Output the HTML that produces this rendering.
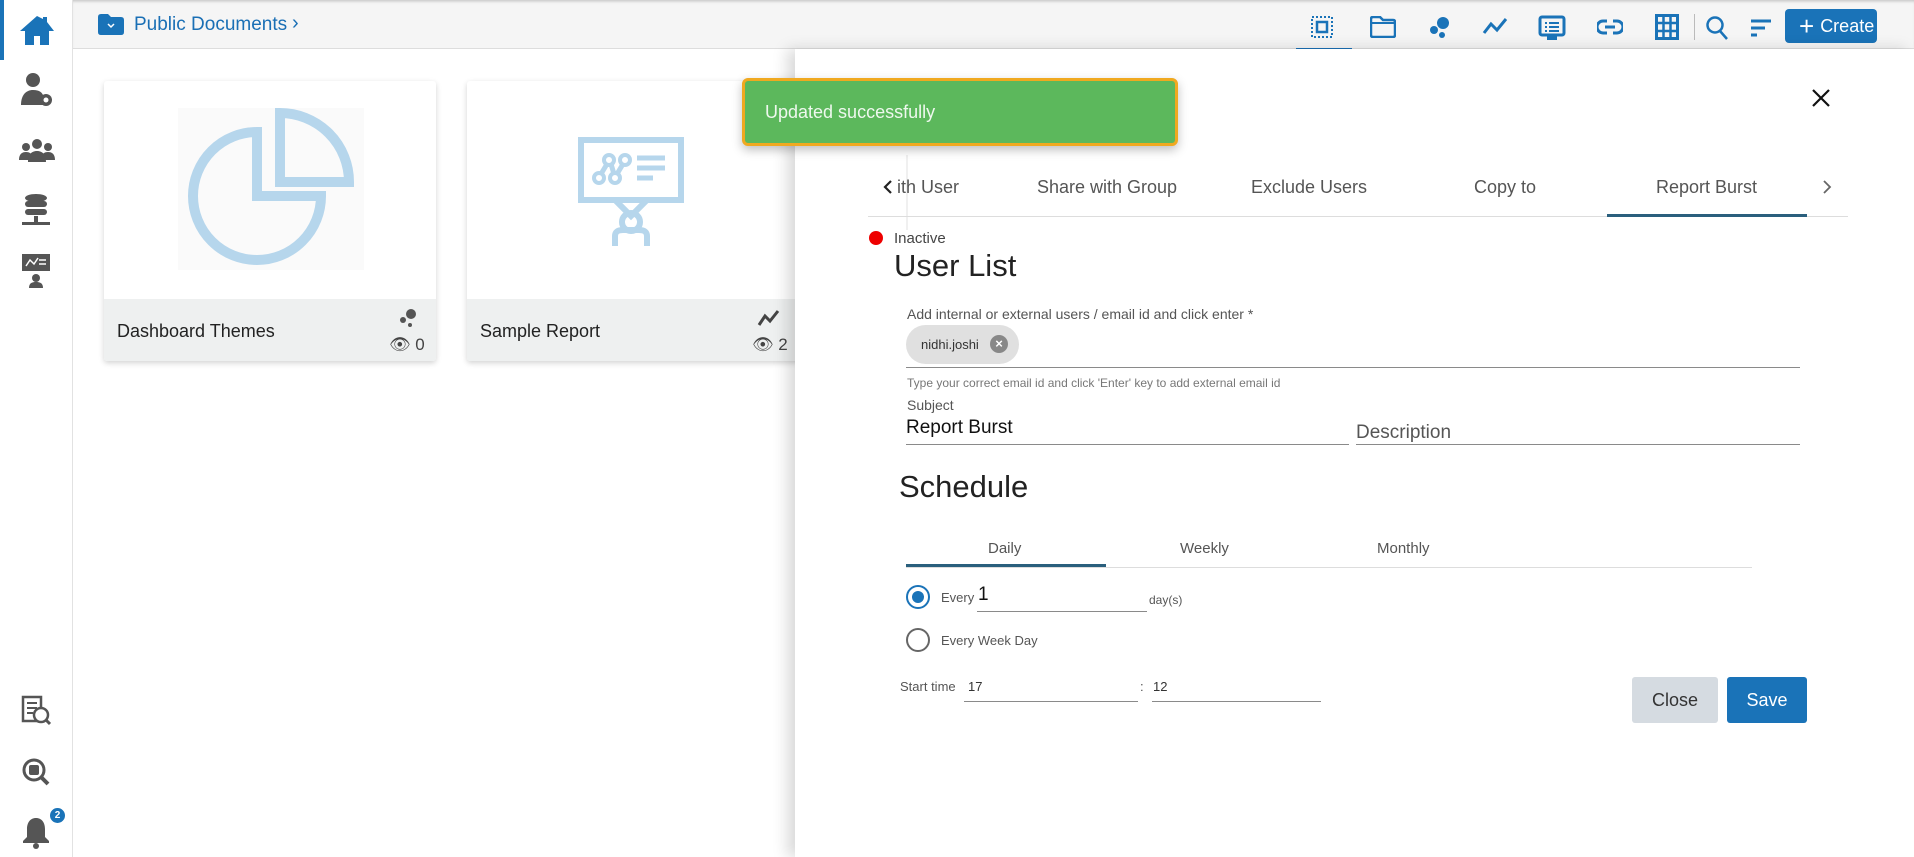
<!DOCTYPE html>
<html><head><meta charset="utf-8"><style>
*{box-sizing:border-box;margin:0;padding:0}
body{width:1914px;height:857px;overflow:hidden;background:#fff;font-family:"Liberation Sans",sans-serif;position:relative;color:#222}
.a{position:absolute}
.side{left:0;top:0;width:73px;height:857px;background:#fff;border-right:1px solid #e2e2e2}
.top{left:73px;top:0;width:1841px;height:49px;background:#f5f5f5;border-bottom:1px solid #ddd;box-shadow:inset 0 3px 3px -2px #bbb}
.card{background:#fff;box-shadow:0 2px 6px rgba(0,0,0,.18);border-radius:3px;overflow:hidden}
.cf{position:absolute;left:0;right:0;bottom:0;height:62px;background:#eef0f0}
.panel{left:795px;top:49px;width:1119px;height:808px;background:#fff;box-shadow:-8px 0 14px rgba(0,0,0,.15)}
.tab{top:177px;font-size:18px;color:#555;white-space:nowrap}
.lbl{color:#555}
.line{height:1px;background:#8a8a8a}
</style></head><body>
<div class="a side"></div>
<div class="a" style="left:0;top:0;width:4px;height:60px;background:#1a73b8"></div>
<svg class="a" style="left:18px;top:14px" width="38" height="32" viewBox="0 0 38 32"><path d="M19 2L2 17h5v14h9v-9h6v9h9V17h5L29 8V3h-4v2z" fill="#1a73b8"/></svg>
<svg class="a" style="left:20px;top:72px" width="34" height="36" viewBox="0 0 34 36"><circle cx="13" cy="8" r="7" fill="#555"/><path d="M1 33c0-10 5-15 12-15s9 3 10 5v10z" fill="#555"/><circle cx="26" cy="28" r="6" fill="#555"/><circle cx="26" cy="28" r="2.5" fill="#fff"/></svg>
<svg class="a" style="left:19px;top:138px" width="36" height="26" viewBox="0 0 36 26"><circle cx="18" cy="6" r="5" fill="#555"/><circle cx="7" cy="9" r="4" fill="#555"/><circle cx="29" cy="9" r="4" fill="#555"/><path d="M0 22c0-6 3-8 7-8s7 2 7 8zM22 22c0-6 3-8 7-8s7 2 7 8zM9 24c0-8 4-11 9-11s9 3 9 11z" fill="#555"/></svg>
<svg class="a" style="left:21px;top:193px" width="30" height="36" viewBox="0 0 30 36"><ellipse cx="15" cy="5" rx="11" ry="4" fill="#555"/><rect x="4" y="8" width="22" height="6" rx="3" fill="#555"/><rect x="4" y="16" width="22" height="6" rx="3" fill="#555"/><rect x="13" y="23" width="4" height="7" fill="#555"/><rect x="1" y="29" width="28" height="3" fill="#555"/></svg>
<svg class="a" style="left:21px;top:253px" width="30" height="36" viewBox="0 0 30 36"><rect x="1" y="1" width="28" height="17" fill="#555"/><path d="M5 13l4-6 4 4 4-6M18 7h7M18 11h7" stroke="#fff" stroke-width="1.5" fill="none"/><circle cx="15" cy="25" r="4" fill="#555"/><path d="M8 35c0-5 3-6 7-6s7 1 7 6z" fill="#555"/></svg>
<svg class="a" style="left:21px;top:695px" width="30" height="32" viewBox="0 0 30 32"><rect x="2" y="2" width="18" height="24" fill="none" stroke="#555" stroke-width="2.5"/><path d="M6 8h10M6 13h10M6 18h6" stroke="#555" stroke-width="2"/><circle cx="20" cy="20" r="7" fill="#fff" stroke="#555" stroke-width="2.5"/><path d="M25 25l4 4" stroke="#555" stroke-width="3"/></svg>
<svg class="a" style="left:21px;top:757px" width="30" height="30" viewBox="0 0 30 30"><circle cx="13" cy="13" r="10" fill="none" stroke="#555" stroke-width="3"/><rect x="8" y="8" width="10" height="10" rx="2" fill="#555"/><path d="M20 20l7 7" stroke="#555" stroke-width="4"/></svg>
<svg class="a" style="left:20px;top:815px" width="32" height="34" viewBox="0 0 32 34"><path d="M16 3c-6 0-9 5-9 11v8l-4 4v2h26v-2l-4-4v-8c0-6-3-11-9-11z" fill="#555"/><circle cx="16" cy="31" r="3" fill="#555"/></svg>
<div class="a" style="left:50px;top:808px;width:15px;height:15px;border-radius:50%;background:#1a73b8;color:#fff;font-size:10px;text-align:center;line-height:15px;font-weight:bold">2</div>

<div class="a top"></div>
<svg class="a" style="left:98px;top:14px" width="26" height="21" viewBox="0 0 26 21"><path d="M0 3q0-3 3-3h7l3 3h10q3 0 3 3v12q0 3-3 3H3q-3 0-3-3z" fill="#1a73b8"/><path d="M10 10l3 3 3-3" stroke="#fff" stroke-width="1.5" fill="none"/></svg>
<div class="a" style="left:134px;top:14px;font-size:19px;color:#1a6fb5">Public Documents</div>
<div class="a" style="left:292px;top:12px;font-size:20px;color:#1a6fb5">›</div>
<svg class="a" style="left:1311px;top:16px" width="22" height="22" viewBox="0 0 22 22"><rect x="1" y="1" width="20" height="20" fill="none" stroke="#1a73b8" stroke-width="2" stroke-dasharray="2 2"/><rect x="6" y="6" width="10" height="10" fill="none" stroke="#1a73b8" stroke-width="2.5"/></svg>
<div class="a" style="left:1296px;top:48px;width:56px;height:2px;background:#1a6fb5"></div>
<svg class="a" style="left:1370px;top:16px" width="26" height="22" viewBox="0 0 26 22"><path d="M1 3q0-2 2-2h7l3 3h10q2 0 2 2v13q0 2-2 2H3q-2 0-2-2z" fill="none" stroke="#1a73b8" stroke-width="2.5"/><path d="M1 7h24" stroke="#1a73b8" stroke-width="2"/></svg>
<svg class="a" style="left:1429px;top:16px" width="22" height="22" viewBox="0 0 22 22"><circle cx="14" cy="7" r="6" fill="#1a73b8"/><circle cx="5" cy="14" r="4" fill="#1a73b8"/><circle cx="13" cy="19" r="3" fill="#1a73b8"/></svg>
<svg class="a" style="left:1482px;top:17px" width="26" height="18" viewBox="0 0 26 18"><path d="M2 16l7-9 6 6 9-11" stroke="#1a73b8" stroke-width="3" fill="none"/></svg>
<svg class="a" style="left:1538px;top:15px" width="28" height="26" viewBox="0 0 28 26"><rect x="2" y="2" width="24" height="18" rx="2" fill="none" stroke="#1a73b8" stroke-width="3"/><path d="M7 8h2M11 8h10M7 12h2M11 12h10M7 16h2M11 16h10" stroke="#1a73b8" stroke-width="2"/><rect x="9" y="21" width="10" height="4" fill="#1a73b8"/></svg>
<svg class="a" style="left:1597px;top:19px" width="26" height="16" viewBox="0 0 26 16"><path d="M10 2H6a6 6 0 000 12h4M16 2h4a6 6 0 010 12h-4M8 8h10" stroke="#1a73b8" stroke-width="3" fill="none"/></svg>
<svg class="a" style="left:1655px;top:14px" width="24" height="26" viewBox="0 0 24 26"><rect x="1.5" y="1.5" width="21" height="23" fill="none" stroke="#1a73b8" stroke-width="3"/><path d="M8.5 2v22M15.5 2v22M2 9h20M2 17h20" stroke="#1a73b8" stroke-width="2.5"/></svg>
<div class="a" style="left:1694px;top:14px;width:1px;height:26px;background:#bbb"></div>
<svg class="a" style="left:1705px;top:15px" width="24" height="26" viewBox="0 0 24 26"><circle cx="10" cy="10" r="7.5" fill="none" stroke="#1a73b8" stroke-width="2.5"/><path d="M15 16l7 8" stroke="#1a73b8" stroke-width="2.5"/></svg>
<svg class="a" style="left:1750px;top:19px" width="22" height="18" viewBox="0 0 22 18"><path d="M1 2h20M1 9h14M1 16h6" stroke="#1a73b8" stroke-width="3"/></svg>
<div class="a" style="left:1785px;top:9px;width:92px;height:34px;background:#1a73b8;border-radius:4px;color:#fff;font-size:18px;line-height:34px;padding-left:14px"><span style="font-size:26px;vertical-align:-3px;margin-right:6px">+</span>Create</div>

<div class="a card" style="left:104px;top:81px;width:332px;height:280px">
<svg class="a" style="left:74px;top:27px" width="186" height="162" viewBox="0 0 186 162"><rect width="186" height="162" fill="#fafafa"/><path d="M79 24A64 64 0 1 0 143 88H79z" fill="none" stroke="#b6d6ec" stroke-width="10"/><path d="M102 5V74H171A69 69 0 0 0 102 5z" fill="none" stroke="#b6d6ec" stroke-width="10"/></svg>
<div class="cf"><div class="a" style="left:13px;top:22px;font-size:18px;color:#222">Dashboard Themes</div>
<svg class="a" style="left:293px;top:9px" width="22" height="20" viewBox="0 0 22 20"><circle cx="14" cy="6" r="5" fill="#555"/><circle cx="6" cy="12" r="3" fill="#555"/><circle cx="13" cy="17" r="2" fill="#555"/></svg>
<div class="a" style="left:285px;top:36px;font-size:17px;color:#444">&#128065;&#xFE0E; 0</div></div>
</div>
<div class="a card" style="left:467px;top:81px;width:340px;height:280px">
<svg class="a" style="left:110px;top:55px" width="110" height="112" viewBox="0 0 110 112"><rect x="4" y="4" width="100" height="60" fill="none" stroke="#b6d6ec" stroke-width="6"/><circle cx="22" cy="42" r="5" fill="none" stroke="#b6d6ec" stroke-width="4"/><circle cx="32" cy="24" r="5" fill="none" stroke="#b6d6ec" stroke-width="4"/><circle cx="38" cy="42" r="5" fill="none" stroke="#b6d6ec" stroke-width="4"/><circle cx="48" cy="24" r="5" fill="none" stroke="#b6d6ec" stroke-width="4"/><path d="M24 38l6-10M34 28l3 10M40 38l6-10M60 22h28M60 32h28M60 42h16" stroke="#b6d6ec" stroke-width="5" fill="none"/><path d="M38 64l16 16 16-16" stroke="#b6d6ec" stroke-width="6" fill="none"/><circle cx="54" cy="86" r="9" fill="none" stroke="#b6d6ec" stroke-width="6"/><path d="M38 110V100q0-6 8-6h16q8 0 8 6v10" stroke="#b6d6ec" stroke-width="6" fill="none"/></svg>
<div class="cf"><div class="a" style="left:13px;top:22px;font-size:18px;color:#222">Sample Report</div>
<svg class="a" style="left:290px;top:10px" width="24" height="18" viewBox="0 0 24 18"><path d="M2 16l6-9 5 5 8-10" stroke="#444" stroke-width="3" fill="none"/></svg>
<div class="a" style="left:285px;top:36px;font-size:17px;color:#444">&#128065;&#xFE0E; 2</div></div>
</div>

<div class="a panel"></div>
<div class="a" style="left:862px;top:82px;font-size:22px;color:#333">Report</div>
<svg class="a" style="left:1811px;top:88px" width="20" height="20" viewBox="0 0 20 20"><path d="M2 2l16 16M18 2L2 18" stroke="#111" stroke-width="2.2"/></svg>
<svg class="a" style="left:883px;top:179px" width="10" height="16" viewBox="0 0 10 16"><path d="M8 2L2 8l6 6" stroke="#222" stroke-width="2.2" fill="none"/></svg>
<div class="a" style="left:906px;top:155px;width:2px;height:75px;background:#f0f0f0"></div>
<div class="a tab" style="left:897px">ith User</div>
<div class="a tab" style="left:1037px">Share with Group</div>
<div class="a tab" style="left:1251px">Exclude Users</div>
<div class="a tab" style="left:1474px">Copy to</div>
<div class="a tab" style="left:1656px">Report Burst</div>
<svg class="a" style="left:1822px;top:179px" width="10" height="16" viewBox="0 0 10 16"><path d="M2 2l6 6-6 6" stroke="#666" stroke-width="1.8" fill="none"/></svg>
<div class="a" style="left:868px;top:216px;width:980px;height:1px;background:#ddd"></div>
<div class="a" style="left:1607px;top:214px;width:200px;height:3px;background:#2a5f7d"></div>

<div class="a" style="left:869px;top:231px;width:14px;height:14px;border-radius:50%;background:#e00"></div>
<div class="a" style="left:894px;top:230px;font-size:15px;color:#444">Inactive</div>
<div class="a" style="left:894px;top:248px;font-size:31px;color:#222">User List</div>
<div class="a lbl" style="left:907px;top:306px;font-size:14px">Add internal or external users / email id and click enter *</div>
<div class="a" style="left:906px;top:325px;width:113px;height:39px;border-radius:20px;background:#e0e0e0"></div>
<div class="a" style="left:921px;top:337px;font-size:13px;color:#333">nidhi.joshi</div>
<div class="a" style="left:990px;top:335px;width:18px;height:18px;border-radius:50%;background:#888;color:#fff;font-size:13px;line-height:18px;text-align:center;font-weight:bold">×</div>
<div class="a line" style="left:906px;top:367px;width:894px"></div>
<div class="a" style="left:907px;top:376px;font-size:12px;color:#777">Type your correct email id and click 'Enter' key to add external email id</div>
<div class="a lbl" style="left:907px;top:397px;font-size:14px">Subject</div>
<div class="a" style="left:906px;top:417px;font-size:19px;color:#111">Report Burst</div>
<div class="a line" style="left:906px;top:444px;width:443px"></div>
<div class="a" style="left:1356px;top:422px;font-size:19px;color:#555">Description</div>
<div class="a line" style="left:1356px;top:444px;width:444px"></div>

<div class="a" style="left:899px;top:469px;font-size:31px;color:#222">Schedule</div>
<div class="a lbl" style="left:988px;top:540px;font-size:15px">Daily</div>
<div class="a lbl" style="left:1180px;top:540px;font-size:15px">Weekly</div>
<div class="a lbl" style="left:1377px;top:540px;font-size:15px">Monthly</div>
<div class="a" style="left:906px;top:567px;width:846px;height:1px;background:#ddd"></div>
<div class="a" style="left:906px;top:564px;width:200px;height:3px;background:#2a5f7d"></div>

<div class="a" style="left:906px;top:585px;width:24px;height:24px;border-radius:50%;border:2px solid #1a73b8"></div>
<div class="a" style="left:912px;top:591px;width:12px;height:12px;border-radius:50%;background:#1a73b8"></div>
<div class="a lbl" style="left:941px;top:590px;font-size:13px">Every</div>
<div class="a" style="left:978px;top:584px;font-size:19px;color:#111">1</div>
<div class="a line" style="left:977px;top:611px;width:170px"></div>
<div class="a lbl" style="left:1149px;top:593px;font-size:12px">day(s)</div>
<div class="a" style="left:906px;top:628px;width:24px;height:24px;border-radius:50%;border:2px solid #666"></div>
<div class="a lbl" style="left:941px;top:633px;font-size:13px">Every Week Day</div>

<div class="a lbl" style="left:900px;top:679px;font-size:13px">Start time</div>
<div class="a" style="left:968px;top:679px;font-size:13px;color:#333">17</div>
<div class="a line" style="left:964px;top:701px;width:174px"></div>
<div class="a lbl" style="left:1140px;top:679px;font-size:13px">:</div>
<div class="a" style="left:1153px;top:679px;font-size:13px;color:#333">12</div>
<div class="a line" style="left:1152px;top:701px;width:169px"></div>

<div class="a" style="left:1632px;top:677px;width:86px;height:46px;background:#d5dbe1;border-radius:3px;font-size:18px;line-height:46px;text-align:center;color:#333">Close</div>
<div class="a" style="left:1727px;top:677px;width:80px;height:46px;background:#1a73b8;border-radius:3px;font-size:18px;line-height:46px;text-align:center;color:#fff">Save</div>

<div class="a" style="left:742px;top:78px;width:436px;height:68px;background:#5cb85c;border:3px solid #f0a920;border-radius:6px;box-shadow:0 4px 10px rgba(0,0,0,.25)"></div>
<div class="a" style="left:765px;top:102px;font-size:18px;color:#eef8ee">Updated successfully</div>
</body></html>
